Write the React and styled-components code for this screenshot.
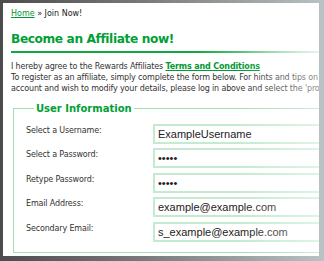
import React from "react";
import styled, { createGlobalStyle } from "styled-components";

const GlobalStyle = createGlobalStyle`
  html, body {
    margin: 0;
    padding: 0;
    height: 261px;
    overflow: hidden;
    background: linear-gradient(90deg, #4c4c4c 0%, #7a7a7a 45%, #a8aeb0 85%, #b9c2c4 100%);
  }
  #root { height: 261px; }
  * { box-sizing: border-box; }
`;

const Frame = styled.div`
  height: 261px;
  padding: 3px 5px 5px 3px;
`;

const Panel = styled.div`
  position: relative;
  height: 100%;
  background: #fff;
  overflow: hidden;
  padding: 5px 0 0 8px;
  font-family: "DejaVu Sans", Verdana, sans-serif;
  color: #333;

  &::after {
    content: "";
    position: absolute;
    inset: 0;
    pointer-events: none;
    background: linear-gradient(90deg, rgba(255,255,255,0) 75%, rgba(255,255,255,0.45) 100%);
  }
`;

const Breadcrumb = styled.div`
  font-size: 8px;
  line-height: 12px;
  color: #222;
  white-space: nowrap;
`;

const Link = styled.a`
  color: #009933;
  text-decoration: underline;
`;

const Heading = styled.h1`
  margin: 10px 0 0;
  font-size: 12.2px;
  letter-spacing: -0.4px;
  line-height: 18px;
  font-weight: bold;
  color: #00a035;
  white-space: nowrap;
  padding-bottom: 3px;
`;

const Rule = styled.div`
  height: 2px;
  background: linear-gradient(90deg, #10a840 0%, #10a840 60%, rgba(16,168,64,0.2) 100%);
`;

const Para = styled.p`
  margin: 8px 0 0;
  font-size: 8px;
  letter-spacing: -0.15px;
  line-height: 11px;
  white-space: nowrap;
`;

const TermsLink = styled(Link)`
  font-weight: bold;
`;

const Fieldset = styled.fieldset`
  margin: 9px 0 0 2px;
  width: 400px;
  border: 1px solid #a6dcb6;
  padding: 10px 12px 10px 12px;
`;

const Legend = styled.legend`
  font-size: 10px;
  font-weight: bold;
  color: #00a035;
  padding: 0 2px;
  margin-left: 8px;
`;

const Form = styled.div`
  display: grid;
  grid-template-columns: 127px 1fr;
  row-gap: 4.4px;
`;

const Label = styled.label`
  font-size: 8px;
  letter-spacing: -0.15px;
  line-height: 12px;
  padding-top: 1px;
  color: #333;
  white-space: nowrap;
`;

const Input = styled.input`
  height: 20px;
  width: 240px;
  border: 2px solid #c4ebd0;
  padding: 0 3px;
  font-family: "Liberation Sans", Arial, sans-serif;
  font-size: 11px;
  color: #222;
  background: #fff;
  outline: none;
`;

const fields = [
  { label: "Select a Username:", type: "text", value: "ExampleUsername" },
  { label: "Select a Password:", type: "password", value: "xxxxx" },
  { label: "Retype Password:", type: "password", value: "xxxxx" },
  { label: "Email Address:", type: "text", value: "example@example.com" },
  { label: "Secondary Email:", type: "text", value: "s_example@example.com" },
];

export default function App() {
  return (
    <>
      <GlobalStyle />
      <Frame>
        <Panel>
          <Breadcrumb>
            <Link href="#">Home</Link> » Join Now!
          </Breadcrumb>
          <Heading>Become an Affiliate now!</Heading>
          <Rule />
          <Para>
            I hereby agree to the Rewards Affiliates <TermsLink href="#">Terms and Conditions</TermsLink>
            <br />
            To register as an affiliate, simply complete the form below. For hints and tips on
            <br />
            account and wish to modify your details, please log in above and select the 'profile' link.
          </Para>
          <Fieldset>
            <Legend>User Information</Legend>
            <Form>
              {fields.map((f) => (
                <React.Fragment key={f.label}>
                  <Label>{f.label}</Label>
                  <Input type={f.type} defaultValue={f.value} readOnly />
                </React.Fragment>
              ))}
            </Form>
          </Fieldset>
        </Panel>
      </Frame>
    </>
  );
}
